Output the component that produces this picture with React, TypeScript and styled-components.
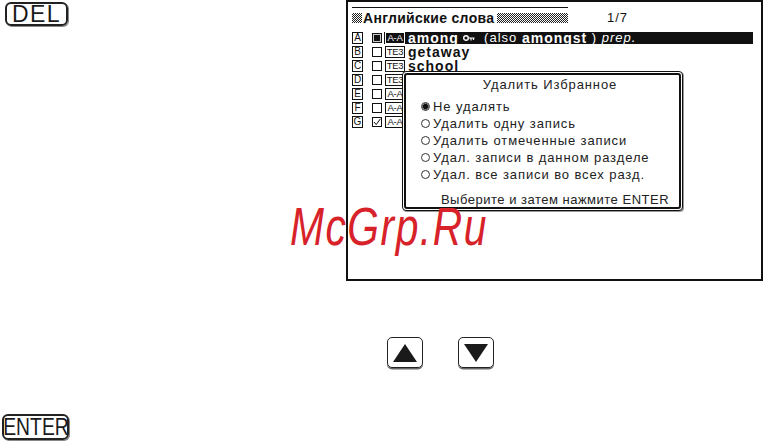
import React from "react";
import styled, { createGlobalStyle } from "styled-components";

const GlobalStyle = createGlobalStyle`
  html, body {
    margin: 0;
    padding: 0;
    background: #fff;
  }
  body {
    font-family: "Liberation Sans", Arial, sans-serif;
    color: #111;
  }
`;

const Page = styled.div`
  position: relative;
  width: 764px;
  height: 442px;
  display: grid;
  grid-template-columns: 346px 417px;
  overflow: hidden;
`;

const LeftColumn = styled.div`
  display: flex;
  flex-direction: column;
  justify-content: space-between;
  align-items: flex-start;
  padding: 2px 0;
`;

const Key = styled.div<{ $left: number; $width: number; $height: number }>`
  margin-left: ${(p) => p.$left}px;
  width: ${(p) => p.$width}px;
  height: ${(p) => p.$height}px;
  box-sizing: border-box;
  border: 2px solid #222;
  border-radius: 6px;
  box-shadow: 1px 1px 0 #888;
  display: flex;
  align-items: center;
  justify-content: center;
  overflow: hidden;
`;

const KeyLabel = styled.span<{ $squeeze?: number; $spacing?: number }>`
  display: inline-block;
  font-size: 23px;
  line-height: 1;
  letter-spacing: ${(p) => p.$spacing || 0}px;
  transform: scaleX(${(p) => p.$squeeze || 1});
  color: #1a1a1a;
`;

const RightColumn = styled.div`
  display: flex;
  flex-direction: column;
`;

const Screen = styled.div`
  position: relative;
  box-sizing: border-box;
  width: 417px;
  height: 281px;
  border: 2px solid #111;
  padding: 5px 8px 0 4px;
`;

const Header = styled.div`
  display: flex;
  align-items: center;
  height: 20px;
`;

const TitleTab = styled.div`
  display: flex;
  align-items: center;
  width: 216px;
  height: 20px;
  box-sizing: border-box;
  border-top: 1px solid #111;
`;

const Hatch = styled.span<{ $width?: number }>`
  display: block;
  height: 10px;
  width: ${(p) => (p.$width ? `${p.$width}px` : "auto")};
  flex: ${(p) => (p.$width ? "none" : "1")};
  background-image: repeating-conic-gradient(#222 0 25%, #fff 0 50%);
  background-size: 2px 2px;
`;

const TitleText = styled.span`
  font-weight: 700;
  font-size: 14px;
  letter-spacing: 0.3px;
  margin: 0 3px 0 1px;
  white-space: nowrap;
`;

const Counter = styled.span`
  margin-left: 39px;
  font-size: 13px;
  letter-spacing: 1px;
`;

const List = styled.div`
  margin-top: 4px;
  display: flex;
  flex-direction: column;
`;

const Row = styled.div`
  display: flex;
  align-items: center;
  height: 14px;
`;

const Letter = styled.span`
  box-sizing: border-box;
  width: 11px;
  height: 12px;
  border: 1px solid #111;
  font-size: 10px;
  line-height: 10px;
  text-align: center;
`;

const Check = styled.span<{ $dark?: boolean }>`
  box-sizing: border-box;
  margin-left: 9px;
  width: 10px;
  height: 10px;
  border: 1px solid #111;
  background: ${(p) => (p.$dark ? "#111" : "#fff")};
  box-shadow: ${(p) => (p.$dark ? "inset 0 0 0 1px #ccc" : "none")};
  display: flex;
  align-items: center;
  justify-content: center;
`;

const Entry = styled.div<{ $active?: boolean }>`
  margin-left: 2px;
  flex: 1;
  display: flex;
  align-items: center;
  height: 12px;
  background: ${(p) => (p.$active ? "#111" : "transparent")};
  color: ${(p) => (p.$active ? "#fff" : "#111")};
  white-space: nowrap;
`;

const Tag = styled.span`
  box-sizing: border-box;
  margin-left: 1px;
  width: 20px;
  height: 12px;
  border: 1px solid currentColor;
  font-size: 9.5px;
  line-height: 10px;
  text-align: center;
  letter-spacing: -0.3px;
`;

const Word = styled.span`
  margin-left: 3px;
  font-size: 14px;
  line-height: 12px;
  letter-spacing: 1px;
  display: flex;
  align-items: center;
`;

const Bold = styled.b`
  font-weight: 700;
`;

const Thin = styled.span`
  font-weight: 400;
  font-size: 13px;
  white-space: pre;
`;

const Italic = styled.i`
  font-weight: 400;
  font-size: 13px;
`;

const Dialog = styled.div`
  position: absolute;
  left: 54px;
  top: 69px;
  width: 281px;
  height: 140px;
  box-sizing: border-box;
  border: 1px solid #111;
  border-radius: 4px;
  padding: 1px;
  background: #fff;
  box-shadow: 1px 1px 0 #999;
`;

const DialogInner = styled.div`
  height: 100%;
  box-sizing: border-box;
  border: 2px solid #111;
  border-radius: 3px;
  padding: 2px 0 0 15px;
  display: flex;
  flex-direction: column;
  font-size: 13px;
  letter-spacing: 0.9px;
  color: #222;
`;

const DialogTitle = styled.div`
  line-height: 16px;
  text-align: center;
`;

const Options = styled.div`
  margin-top: 5px;
  display: flex;
  flex-direction: column;
`;

const Option = styled.div`
  display: flex;
  align-items: center;
  gap: 3px;
  height: 17px;
  white-space: nowrap;
`;

const Radio = styled.span<{ $on?: boolean }>`
  box-sizing: border-box;
  width: 9px;
  height: 9px;
  border-radius: 50%;
  border: 1px solid #333;
  background: ${(p) =>
    p.$on ? "radial-gradient(circle, #111 0 2.6px, #777 2.8px 3.2px, #fff 3.4px)" : "#fff"};
`;

const Footer = styled.div`
  margin-top: 9px;
  padding-left: 10px;
  line-height: 16px;
  letter-spacing: 0.5px;
  text-align: center;
`;

const ArrowRow = styled.div`
  margin-top: 56px;
  padding-left: 41px;
  display: flex;
  gap: 35px;
`;

const ArrowKey = styled.div`
  box-sizing: border-box;
  width: 36px;
  height: 31px;
  border: 1.5px solid #222;
  border-radius: 5px;
  box-shadow: 0 1.5px 0 #666;
  display: flex;
  align-items: center;
  justify-content: center;
`;

const Watermark = styled.div`
  position: absolute;
  left: 290px;
  top: 199px;
  font-size: 54px;
  line-height: 54px;
  font-style: italic;
  letter-spacing: 2px;
  color: #d8222a;
  transform: scaleX(0.755);
  transform-origin: left top;
  white-space: nowrap;
  pointer-events: none;
`;

const KeyIcon = () => (
  <svg width="12" height="8" viewBox="0 0 12 8" style={{ marginLeft: 4 }}>
    <circle cx="3" cy="4" r="2.3" fill="none" stroke="currentColor" strokeWidth="1.4" />
    <path d="M5.3 4 H11.5 M8 4 V6.5 M10.5 4 V6" stroke="currentColor" strokeWidth="1.2" />
  </svg>
);

const CheckMark = () => (
  <svg width="8" height="8" viewBox="0 0 8 8">
    <path d="M1 4 L3.2 6.6 L7.4 0.8" fill="none" stroke="#111" strokeWidth="1" />
  </svg>
);

type Item = { letter: string; tag: string; word?: React.ReactNode; active?: boolean; checked?: boolean };

const items: Item[] = [
  {
    letter: "A",
    tag: "A-A",
    active: true,
    word: (
      <>
        <Bold>among</Bold>
        <KeyIcon />
        <Thin>{"  (also "}</Thin>
        <Bold>amongst</Bold>
        <Thin>{" ) "}</Thin>
        <Italic>prep.</Italic>
      </>
    ),
  },
  { letter: "B", tag: "TE3", word: <Bold>getaway</Bold> },
  { letter: "C", tag: "TE3", word: <Bold>school</Bold> },
  { letter: "D", tag: "TE3" },
  { letter: "E", tag: "A-A" },
  { letter: "F", tag: "A-A" },
  { letter: "G", tag: "A-A", checked: true },
];

const options = [
  "Не удалять",
  "Удалить одну запись",
  "Удалить отмеченные записи",
  "Удал. записи в данном разделе",
  "Удал. все записи во всех разд.",
];

export default function App() {
  return (
    <Page>
      <GlobalStyle />
      <LeftColumn>
        <Key $left={5} $width={63} $height={24}>
          <KeyLabel $spacing={1.5}>DEL</KeyLabel>
        </Key>
        <Key $left={2} $width={67} $height={26}>
          <KeyLabel $squeeze={0.84}>ENTER</KeyLabel>
        </Key>
      </LeftColumn>

      <RightColumn>
        <Screen>
          <Header>
            <TitleTab>
              <Hatch $width={10} />
              <TitleText>Английские слова</TitleText>
              <Hatch />
            </TitleTab>
            <Counter>1/7</Counter>
          </Header>
          <List>
            {items.map((it) => (
              <Row key={it.letter}>
                <Letter>{it.letter}</Letter>
                <Check $dark={it.active}>{it.checked && <CheckMark />}</Check>
                <Entry $active={it.active}>
                  <Tag>{it.tag}</Tag>
                  {it.word && <Word>{it.word}</Word>}
                </Entry>
              </Row>
            ))}
          </List>

          <Dialog>
            <DialogInner>
              <DialogTitle>Удалить Избранное</DialogTitle>
              <Options>
                {options.map((o, i) => (
                  <Option key={o}>
                    <Radio $on={i === 0} />
                    {o}
                  </Option>
                ))}
              </Options>
              <Footer>Выберите и затем нажмите ENTER</Footer>
            </DialogInner>
          </Dialog>
        </Screen>

        <ArrowRow>
          <ArrowKey>
            <svg width="24" height="18" viewBox="0 0 24 18">
              <path d="M12 0 L24 18 H0 Z" fill="#1a1a1a" />
            </svg>
          </ArrowKey>
          <ArrowKey>
            <svg width="24" height="18" viewBox="0 0 24 18">
              <path d="M0 0 H24 L12 18 Z" fill="#1a1a1a" />
            </svg>
          </ArrowKey>
        </ArrowRow>
      </RightColumn>

      <Watermark>McGrp.Ru</Watermark>
    </Page>
  );
}
